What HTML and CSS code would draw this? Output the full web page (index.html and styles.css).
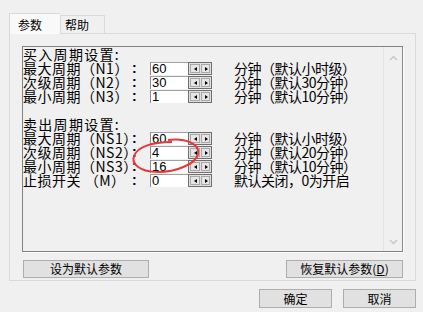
FILE: index.html
```html
<!DOCTYPE html>
<html lang="zh-CN">
<head>
  <meta charset="UTF-8">
  <title>参数设置</title>
  <link rel="stylesheet" href="styles.css">
</head>
<body>
  <div class="dialog">
    <div class="tabs">
      <div class="tab active">参数</div>
      <div class="tab">帮助</div>
    </div>

    <div class="panel">
      <div class="box">
        <div class="content">
          <div class="heading">买入周期设置:</div>
          <div class="row">
            <span class="label">最大周期（N1）</span><span class="colon">:</span>
            <span class="input">60</span><span class="spin"><i class="l"></i><i class="r"></i></span>
            <span class="note">分钟（默认小时级）</span>
          </div>
          <div class="row">
            <span class="label">次级周期（N2）</span><span class="colon">:</span>
            <span class="input">30</span><span class="spin"><i class="l"></i><i class="r"></i></span>
            <span class="note">分钟（默认30分钟）</span>
          </div>
          <div class="row">
            <span class="label">最小周期（N3）</span><span class="colon">:</span>
            <span class="input">1</span><span class="spin"><i class="l"></i><i class="r"></i></span>
            <span class="note">分钟（默认10分钟）</span>
          </div>
          <div class="blank"></div>

          <div class="heading">卖出周期设置:</div>
          <div class="row">
            <span class="label">最大周期（NS1）</span><span class="colon">:</span>
            <span class="input">60</span><span class="spin"><i class="l"></i><i class="r"></i></span>
            <span class="note">分钟（默认小时级）</span>
          </div>
          <div class="row">
            <span class="label">次级周期（NS2）</span><span class="colon">:</span>
            <span class="input">4</span><span class="spin"><i class="l"></i><i class="r"></i></span>
            <span class="note">分钟（默认20分钟）</span>
          </div>
          <div class="row">
            <span class="label">最小周期（NS3）</span><span class="colon">:</span>
            <span class="input">16</span><span class="spin"><i class="l"></i><i class="r"></i></span>
            <span class="note">分钟（默认10分钟）</span>
          </div>
          <div class="row">
            <span class="label">止损开关 （M）</span><span class="colon">:</span>
            <span class="input">0</span><span class="spin"><i class="l"></i><i class="r"></i></span>
            <span class="note">默认关闭，0为开启</span>
          </div>
        </div>
        <div class="scrollbar">
          <svg width="19" height="12" viewBox="0 0 19 12"><path d="M6 8 L9.5 4.5 L13 8" fill="none" stroke="#c8c8c8" stroke-width="1.5"/></svg>
          <svg width="19" height="12" viewBox="0 0 19 12"><path d="M6 4 L9.5 7.5 L13 4" fill="none" stroke="#c8c8c8" stroke-width="1.5"/></svg>
        </div>
      </div>

      <div class="panel-buttons">
        <button class="btn wide">设为默认参数</button>
        <button class="btn restore">恢复默认参数(<u>D</u>)</button>
      </div>
    </div>

    <div class="footer">
      <button class="btn ok">确定</button>
      <button class="btn ok">取消</button>
    </div>

    <svg class="mark" width="80" height="44" viewBox="0 0 80 44">
      <path d="M40 5 C 58 3, 72 9, 70 19 C 68 29, 48 37, 30 37 C 12 37, 3 29, 6 21 C 9 12, 24 7, 44 7"
            fill="none" stroke="#e8373a" stroke-width="2"/>
    </svg>
  </div>
</body>
</html>
```

FILE: styles.css
```css
body {
  margin: 0;
  background: #f0f0f0;
  font-family: "Noto Sans CJK SC", "Liberation Sans", sans-serif;
  color: #000;
}
.dialog {
  position: relative;
  width: 423px;
  height: 312px;
  padding: 13px 0 0 9px;
  box-sizing: border-box;
}
.tabs {
  display: flex;
  align-items: flex-end;
  height: 20px;
}
.tab {
  font-size: 12px;
  line-height: 17px;
  height: 18px;
  padding: 0 8px 0 4px;
  border: 1px solid #d9d9d9;
  border-bottom: none;
  background: #f0f0f0;
  box-sizing: border-box;
  width: 45px;
}
.tab.active {
  height: 21px;
  width: 51px;
  padding: 2px 0 0 8px;
  background: #f9f9f9;
  position: relative;
  z-index: 1;
  margin-bottom: -1px;
  border-right: none;
}
.panel {
  width: 407px;
  height: 248px;
  border: 1px solid #d9d9d9;
  box-sizing: border-box;
  padding: 12px 0 0 12px;
  background: #f0f0f0;
}
.box {
  display: flex;
  width: 381px;
  height: 206px;
  border: 1px solid #828282;
  border-right-color: #8a8a8a;
  box-shadow: 1px 1px 0 #fff;
  box-sizing: border-box;
}
.content {
  flex: 1;
  font-size: 14px;
  line-height: 14px;
}
.heading {
  height: 14px;
  white-space: nowrap;
  letter-spacing: 1.3px;
}
.blank {
  height: 14px;
}
.row {
  display: grid;
  grid-template-columns: 109px 18px 38px 24px 1fr;
  height: 14px;
  align-items: start;
  white-space: nowrap;
}
.label {
  letter-spacing: 0.5px;
}
.colon {
  font-family: "Liberation Sans", sans-serif;
  font-size: 14px;
  font-weight: bold;
}
.input {
  height: 13px;
  margin-top: 1px;
  background: #fff;
  border-top: 1px solid #a0a0a0;
  border-left: 1px solid #8c8c8c;
  box-sizing: border-box;
  font-family: "Liberation Sans", sans-serif;
  font-size: 13px;
  line-height: 12px;
  padding-left: 1px;
}
.spin {
  display: flex;
  height: 13px;
  margin-top: 1px;
  border: 1px solid #6e6e6e;
  box-sizing: border-box;
  background: #e1e1e1;
  padding: 1px;
  gap: 1px;
}
.spin i {
  flex: 1;
  border: 1px solid #a8a8a8;
  background: #e6e6e6;
  position: relative;
}
.spin i::after {
  content: "";
  position: absolute;
  top: 2px;
  left: 3px;
  border-top: 2.5px solid transparent;
  border-bottom: 2.5px solid transparent;
}
.spin i.l::after {
  border-right: 3px solid #000;
}
.spin i.r::after {
  border-left: 3px solid #000;
}
.note {
  padding-left: 22px;
  letter-spacing: -0.5px;
}
.scrollbar {
  width: 18px;
  border-left: 1px solid #e3e3e3;
  display: flex;
  flex-direction: column;
  justify-content: space-between;
  padding: 5px 0 3px;
}
.panel-buttons {
  display: flex;
  justify-content: space-between;
  width: 380px;
  margin-top: 8px;
  padding-left: 1px;
}
.btn {
  font-family: "Noto Sans CJK SC", sans-serif;
  font-size: 12px;
  height: 18px;
  line-height: 14px;
  padding: 0;
  background: #e1e1e1;
  border: 1px solid #adadad;
  color: #000;
}
.btn.wide {
  width: 126px;
}
.btn.restore {
  width: 117px;
}
.footer {
  display: flex;
  justify-content: flex-end;
  gap: 11px;
  width: 407px;
  margin-top: 8px;
}
.btn.ok {
  width: 73px;
  height: 19px;
}
.mark {
  position: absolute;
  left: 128px;
  top: 135px;
}
```
